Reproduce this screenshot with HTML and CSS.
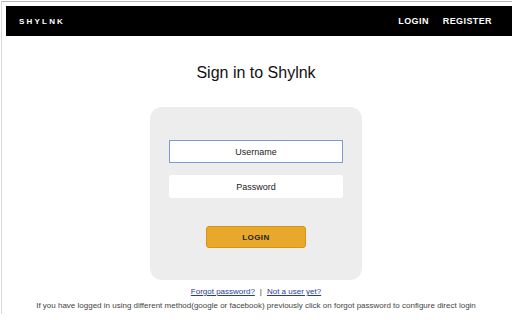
FILE: index.html
```html
<!DOCTYPE html>
<html>
<head>
<meta charset="utf-8">
<link rel="stylesheet" href="styles.css">
</head>
<body>
<div class="frame">
  <header class="topbar">
    <div class="brand">SHYLNK</div>
    <nav class="nav">
      <a class="nav-link">LOGIN</a>
      <a class="nav-link">REGISTER</a>
    </nav>
  </header>
  <main class="main">
    <h1 class="title">Sign in to Shylnk</h1>
    <form class="card">
      <input class="field field-focus" type="text" placeholder="Username">
      <input class="field" type="password" placeholder="Password">
      <button class="btn" type="button">LOGIN</button>
    </form>
    <div class="links">
      <a class="link">Forgot password?</a>
      <span class="sep">|</span>
      <a class="link">Not a user yet?</a>
    </div>
    <p class="note">If you have logged in using different method(google or facebook) previously click on forgot password to configure direct login</p>
  </main>
</div>
</body>
</html>
```
FILE: styles.css
```css
html, body {
  margin: 0;
  padding: 0;
  background: #fff;
  font-family: "Liberation Sans", Arial, sans-serif;
}
body {
  padding-top: 1px;
}
.frame {
  border-top: 1px solid #b8b8b8;
  border-left: 1px solid #d8d8d8;
  margin-left: 1px;
  padding: 4px 0 0 4px;
  height: 313px;
  box-sizing: border-box;
}
.topbar {
  height: 30px;
  background: #000;
  display: flex;
  align-items: center;
  justify-content: space-between;
  padding: 0 20px 0 13px;
  color: #fff;
}
.brand {
  font-size: 8px;
  font-weight: bold;
  letter-spacing: 2.2px;
}
.nav {
  display: flex;
  gap: 14px;
}
.nav-link {
  font-size: 9px;
  font-weight: bold;
  letter-spacing: 0.4px;
  color: #fff;
}
.main {
  display: flex;
  flex-direction: column;
  align-items: center;
  margin-left: -6px;
}
.title {
  font-size: 16px;
  font-weight: normal;
  color: #111;
  margin: 28px 0 0;
  line-height: 18px;
}
.card {
  margin-top: 25px;
  width: 212px;
  height: 173px;
  box-sizing: border-box;
  background: #ededed;
  border-radius: 12px;
  display: flex;
  flex-direction: column;
  align-items: center;
  padding-top: 33px;
}
.field {
  width: 174px;
  height: 23px;
  box-sizing: border-box;
  border: 1px solid #fff;
  border-radius: 2px;
  background: #fff;
  text-align: center;
  font-family: "Liberation Sans", Arial, sans-serif;
  font-size: 9px;
  color: #222;
  margin: 0 0 12px;
  padding: 0;
  outline: none;
}
.field::placeholder {
  color: #222;
}
.field-focus {
  border-color: #7f9ad0;
  border-radius: 0;
}
.btn {
  margin-top: 16px;
  width: 100px;
  height: 22px;
  background: #e8a82b;
  border: 1px solid #d39418;
  border-radius: 3px;
  font-family: "Liberation Sans", Arial, sans-serif;
  font-size: 8px;
  font-weight: bold;
  letter-spacing: 0.4px;
  color: #222;
  padding: 0;
}
.links {
  margin-top: 7px;
  font-size: 8px;
  display: flex;
  gap: 5px;
  align-items: center;
  line-height: 10px;
}
.link {
  color: #2a3a9a;
  text-decoration: underline;
}
.sep {
  color: #333;
}
.note {
  margin: 4px 0 0;
  font-size: 8px;
  color: #444;
  line-height: 10px;
  white-space: nowrap;
}
```
